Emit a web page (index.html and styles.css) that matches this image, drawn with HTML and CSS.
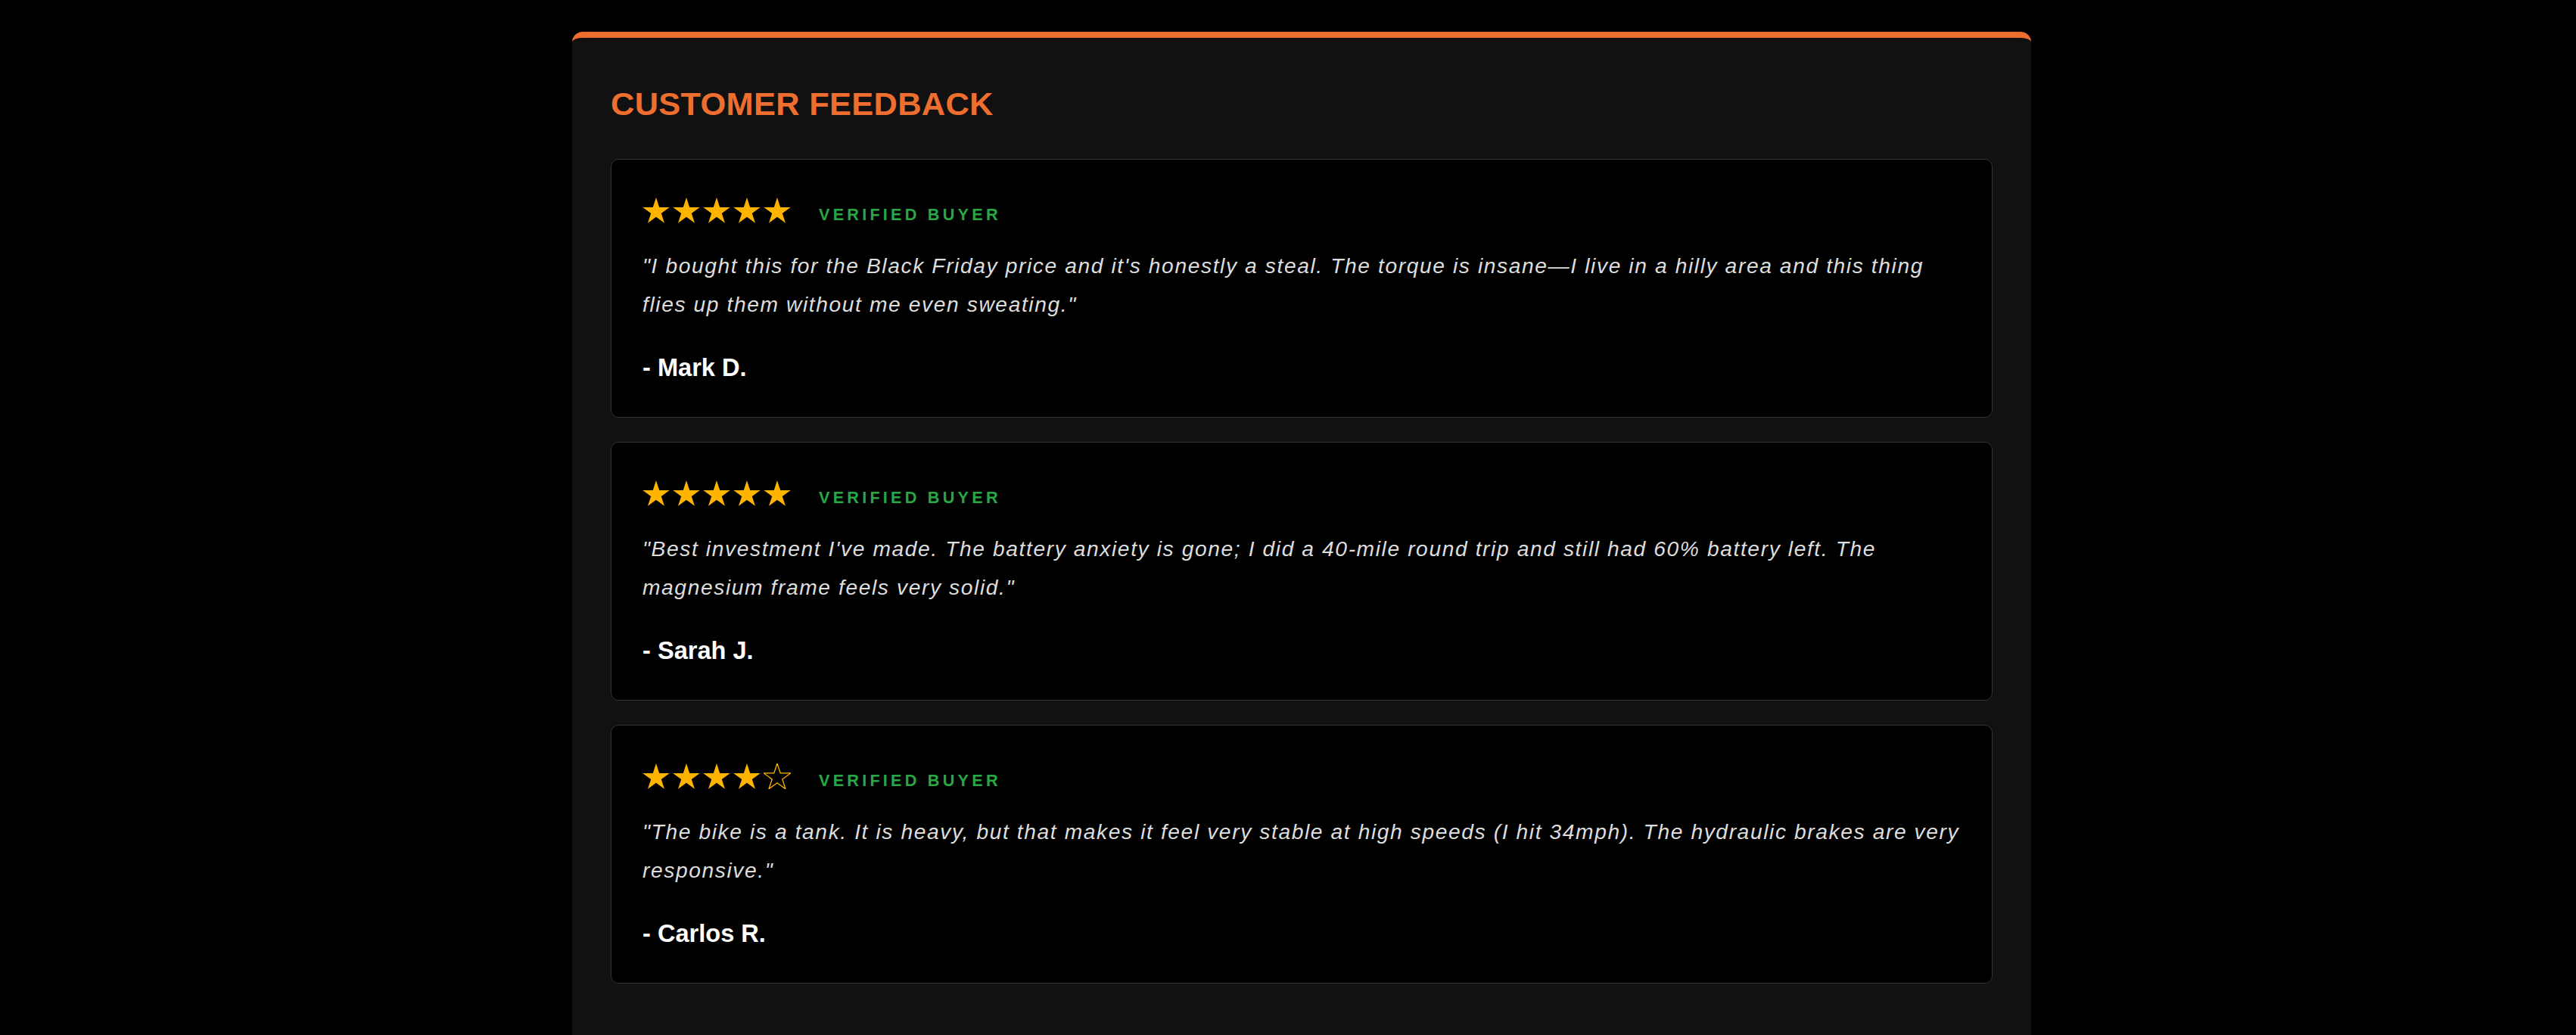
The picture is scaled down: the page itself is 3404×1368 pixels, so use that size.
FILE: index.html
```html
<!DOCTYPE html>
<html lang="en">

<head>
    <meta charset="UTF-8">
    <meta name="viewport" content="width=device-width, initial-scale=1.0">
    <title>Customer Feedback</title>
    <link rel="stylesheet" href="styles.css">
</head>

<body>
    <!-- star shape, reused by every rating -->
    <svg class="sprite" xmlns="http://www.w3.org/2000/svg">
        <symbol id="star" viewBox="2 0 96 91">
            <path d="M50 0 L61.23 34.55 L97.55 34.55 L68.17 55.9 L79.39 90.45 L50 69.1 L20.61 90.45 L31.83 55.9 L2.45 34.55 L38.77 34.55 Z" />
        </symbol>
    </svg>

    <section class="reviews">
        <h2>Customer Feedback</h2>

        <div class="review-list">
            <div class="review">
                <div class="review-top">
                    <div class="stars">
                        <svg class="star"><use href="#star" /></svg>
                        <svg class="star"><use href="#star" /></svg>
                        <svg class="star"><use href="#star" /></svg>
                        <svg class="star"><use href="#star" /></svg>
                        <svg class="star"><use href="#star" /></svg>
                    </div>
                    <span class="verified">Verified Buyer</span>
                </div>
                <p class="quote">"I bought this for the Black Friday price and it's honestly a steal. The torque is insane—I live in a hilly area and this thing flies up them without me even sweating."</p>
                <p class="author">- Mark D.</p>
            </div>

            <div class="review">
                <div class="review-top">
                    <div class="stars">
                        <svg class="star"><use href="#star" /></svg>
                        <svg class="star"><use href="#star" /></svg>
                        <svg class="star"><use href="#star" /></svg>
                        <svg class="star"><use href="#star" /></svg>
                        <svg class="star"><use href="#star" /></svg>
                    </div>
                    <span class="verified">Verified Buyer</span>
                </div>
                <p class="quote">"Best investment I've made. The battery anxiety is gone; I did a 40-mile round trip and still had 60% battery left. The magnesium frame feels very solid."</p>
                <p class="author">- Sarah J.</p>
            </div>

            <div class="review">
                <div class="review-top">
                    <div class="stars">
                        <svg class="star"><use href="#star" /></svg>
                        <svg class="star"><use href="#star" /></svg>
                        <svg class="star"><use href="#star" /></svg>
                        <svg class="star"><use href="#star" /></svg>
                        <svg class="star empty"><use href="#star" /></svg>
                    </div>
                    <span class="verified">Verified Buyer</span>
                </div>
                <p class="quote">"The bike is a tank. It is heavy, but that makes it feel very stable at high speeds (I hit 34mph). The hydraulic brakes are very responsive."</p>
                <p class="author">- Carlos R.</p>
            </div>
        </div>
    </section>
</body>

</html>
```

FILE: styles.css
```css
* {
    box-sizing: border-box;
}

body {
    margin: 0;
    padding: 42px 0 0 36px;
    background: #000;
    font-family: "Liberation Sans", Arial, Helvetica, sans-serif;
    overflow: hidden;
}

.sprite {
    display: none;
}

.reviews {
    width: 1928px;
    min-height: calc(100vh - 42px);
    margin: 0 auto;
    padding: 63px 51px 52px;
    background: #111;
    border-top: 8px solid #ee6e2f;
    border-radius: 14px 14px 0 0;
}

.reviews h2 {
    margin: 0 0 48px;
    font-size: 43.4px;
    font-weight: bold;
    letter-spacing: 0.3px;
    text-transform: uppercase;
    color: #ee6e2f;
}

.review-list {
    display: flex;
    flex-direction: column;
    gap: 32.5px;
}

.review {
    background: #000;
    border: 1px solid #333;
    border-radius: 10px;
    padding: 50px 41px 46px;
}

.review-top {
    display: flex;
    align-items: flex-end;
}

.stars {
    display: flex;
    gap: 4px;
}

.star {
    width: 36px;
    height: 34px;
    fill: #ffb400;
    overflow: visible;
}

.star.empty {
    fill: none;
    stroke: #ffb400;
    stroke-width: 3.5;
}

.verified {
    margin-left: 37px;
    font-size: 21.7px;
    line-height: 1;
    font-weight: bold;
    letter-spacing: 4.2px;
    text-transform: uppercase;
    color: #28a745;
}

.quote {
    margin: 31px 0 0;
    font-size: 28.2px;
    line-height: 51px;
    font-style: italic;
    letter-spacing: 1.6px;
    color: #ddd;
}

.author {
    margin: 38.5px 0 0;
    font-size: 32.6px;
    font-weight: bold;
    color: #fff;
}
```
